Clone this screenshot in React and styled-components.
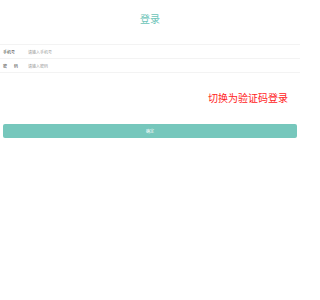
import React from "react";
import styled, { createGlobalStyle } from "styled-components";

const Global = createGlobalStyle`
  html, body { margin: 0; padding: 0; background: #fff; }
  body { font-family: "Noto Sans CJK SC", "Noto Sans", sans-serif; }
`;

const Page = styled.div`
  width: 300px;
  display: flex;
  flex-direction: column;
`;

const Title = styled.h1`
  margin: 0;
  height: 44px;
  display: flex;
  align-items: center;
  justify-content: center;
  padding-bottom: 8px;
  box-sizing: border-box;
  font-size: 10px;
  font-weight: 400;
  color: #6cc4b8;
`;

const Form = styled.div`
  display: flex;
  flex-direction: column;
  border-top: 1px solid #f3f3f3;
`;

const Row = styled.div`
  display: flex;
  align-items: center;
  height: 13px;
  border-bottom: 1px solid #f3f3f3;
  padding-left: 3px;
`;

const Label = styled.span`
  width: 25px;
  font-size: 4px;
  color: #333;
  letter-spacing: ${(p) => p.$spaced || 0}px;
`;

const Input = styled.span`
  font-size: 4px;
  color: #999;
`;

const Switch = styled.div`
  display: flex;
  justify-content: flex-end;
  padding: 18px 12px 0 0;
  height: 38px;
  box-sizing: border-box;
  font-size: 10px;
  line-height: 14px;
  color: #ff2222;
  font-family: "Noto Sans CJK SC", sans-serif;
`;

const Button = styled.div`
  margin: 13px 3px 0 3px;
  height: 14px;
  border-radius: 2px;
  background: #76c7bc;
  color: #fff;
  font-size: 4px;
  display: flex;
  align-items: center;
  justify-content: center;
`;

export default function App() {
  return (
    <Page>
      <Global />
      <Title>登录</Title>
      <Form>
        <Row>
          <Label>手机号</Label>
          <Input>请输入手机号</Input>
        </Row>
        <Row>
          <Label $spaced={3}>密 码</Label>
          <Input>请输入密码</Input>
        </Row>
      </Form>
      <Switch>切换为验证码登录</Switch>
      <Button>确定</Button>
    </Page>
  );
}
